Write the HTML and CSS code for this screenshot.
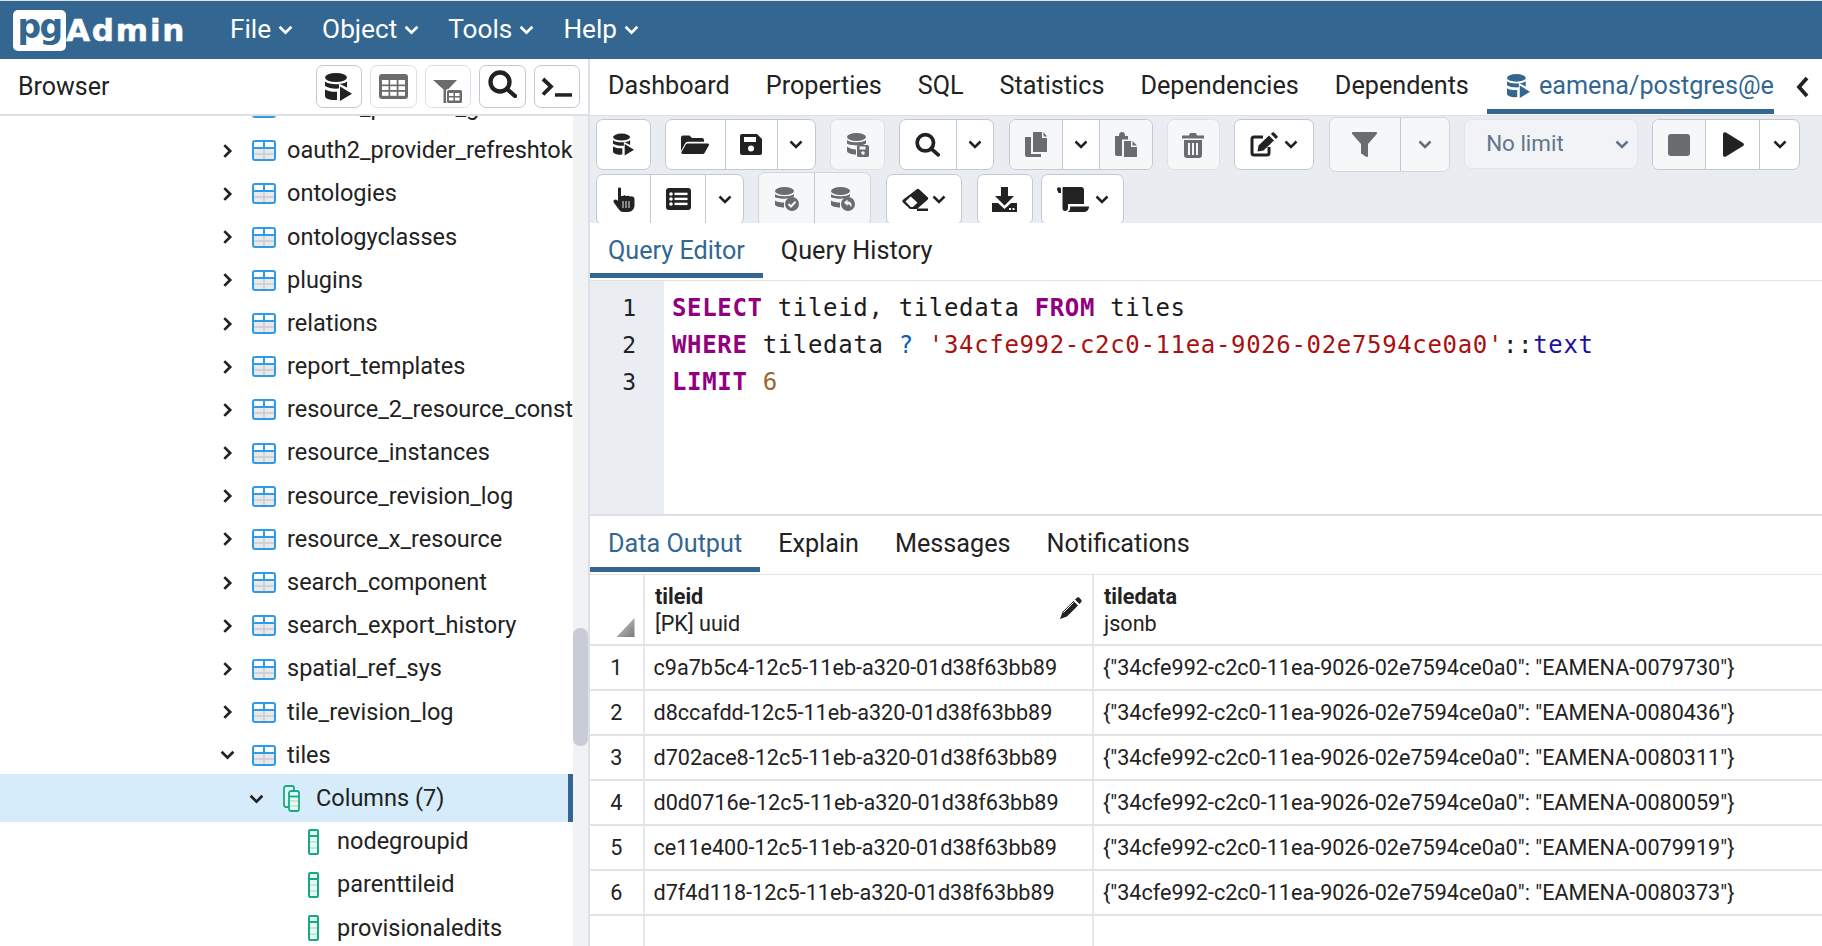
FILE: index.html
```html
<!DOCTYPE html>
<html lang="en">
<head>
<meta charset="utf-8">
<title>pgAdmin</title>
<link rel="stylesheet" href="styles.css">
</head>
<body>
<svg class="sprite" aria-hidden="true">
  <symbol id="chev" viewBox="0 0 14 9"><polyline points="1.5,1.5 7,7 12.5,1.5" fill="none" stroke="currentColor" stroke-width="2.5"/></symbol>
  <symbol id="dbrun" viewBox="0 0 27 28"><g fill="currentColor"><ellipse cx="11" cy="4.5" rx="11" ry="4.5"/><path d="M0 8.5C4 12 18 12 22 8.5V14.5L14 10.5V15.5C9 16 3 15 0 13Z"/><path d="M0 16.5C3 18.5 8 19 12 18.8V27C6 27.5 0 26 0 23Z"/><path d="M15 13.5L27 20.8 15 28Z"/></g></symbol>
  <symbol id="grid" viewBox="0 0 29 25"><rect width="29" height="25" rx="3" fill="currentColor"/><g fill="#fff"><rect x="3" y="6" width="6.5" height="4.5"/><rect x="11.2" y="6" width="6.5" height="4.5"/><rect x="19.5" y="6" width="6.5" height="4.5"/><rect x="3" y="12.2" width="6.5" height="3.8"/><rect x="11.2" y="12.2" width="6.5" height="3.8"/><rect x="19.5" y="12.2" width="6.5" height="3.8"/><rect x="3" y="17.8" width="6.5" height="4"/><rect x="11.2" y="17.8" width="6.5" height="4"/><rect x="19.5" y="17.8" width="6.5" height="4"/></g></symbol>
  <symbol id="ftable" viewBox="0 0 29 23"><path d="M0 0H24L15 9.5V23H10.500V9.500Z" fill="currentColor"/><rect x="13" y="9" width="16" height="14" rx="1.500" fill="#fff"/><rect x="14" y="10" width="15" height="13" rx="1.500" fill="currentColor"/><g fill="#fff"><rect x="16" y="13" width="4.500" height="3"/><rect x="22" y="13" width="4.500" height="3"/><rect x="16" y="17.500" width="4.500" height="3"/><rect x="22" y="17.500" width="4.500" height="3"/></g></symbol>
  <symbol id="search" viewBox="0 0 29 28"><circle cx="12" cy="12" r="9.500" fill="none" stroke="currentColor" stroke-width="4.300"/><line x1="19" y1="19" x2="27" y2="26" stroke="currentColor" stroke-width="4.300" stroke-linecap="round"/></symbol>
  <symbol id="term" viewBox="0 0 31 20"><polyline points="2,2 10,9.500 2,17.500" fill="none" stroke="currentColor" stroke-width="3.800"/><rect x="14" y="16.200" width="17" height="3.500" fill="currentColor"/></symbol>
  <symbol id="folder" viewBox="0 0 28 19"><g fill="currentColor"><path d="M0 16V2.500A2 2 0 0 1 2 .5H8.500L11 3H21A2 2 0 0 1 23 5V6.800H7A3.500 3.500 0 0 0 3.800 9Z"/><path d="M6.500 8.500H26.500C27.800 8.500 28.300 9.500 27.800 10.500L23.500 18A2 2 0 0 1 22 19H1.500C.5 19 0 18 .5 17L4.800 9.500A2 2 0 0 1 6.500 8.500Z"/></g></symbol>
  <symbol id="save" viewBox="0 0 22 21"><path d="M2 0H17L22 5V19A2 2 0 0 1 20 21H2A2 2 0 0 1 0 19V2A2 2 0 0 1 2 0Z" fill="currentColor"/><rect x="4" y="3" width="12" height="5" fill="#fff"/><circle cx="11" cy="14.500" r="3" fill="#fff"/></symbol>
  <symbol id="dbsave" viewBox="0 0 22 24"><g fill="currentColor"><ellipse cx="9.500" cy="4" rx="9.500" ry="4"/><path d="M0 7C2.500 10 16.500 10 19 7V10.500C16.500 13 2.500 13 0 10.500Z"/><path d="M0 13.500C2 15.500 6 16.500 9 16.500V21.500C5 21.500 0 20 0 18Z"/><rect x="10" y="12" width="12" height="12" rx="1.500"/></g><rect x="12.500" y="13.500" width="6" height="3" fill="#f6f7f9"/><circle cx="16" cy="20" r="1.800" fill="#f6f7f9"/></symbol>
  <symbol id="dbcheck" viewBox="0 0 24 24"><g fill="currentColor"><ellipse cx="9.500" cy="4" rx="9.500" ry="4"/><path d="M0 7C2.500 10 16.500 10 19 7V9.500C13 11.500 11 13 0 10.500Z"/><path d="M0 13.500C2 15 6 15.500 9 15.500V20.500C5 20.500 0 19.500 0 17.500Z"/><circle cx="17" cy="17" r="7"/></g><polyline points="13.500,17 16,19.500 20.500,14.800" fill="none" stroke="#f6f7f9" stroke-width="2"/></symbol>
  <symbol id="dbundo" viewBox="0 0 24 24"><g fill="currentColor"><ellipse cx="9.500" cy="4" rx="9.500" ry="4"/><path d="M0 7C2.500 10 16.500 10 19 7V9.500C13 11.500 11 13 0 10.500Z"/><path d="M0 13.500C2 15 6 15.500 9 15.500V20.500C5 20.500 0 19.500 0 17.500Z"/><circle cx="17" cy="17" r="7"/></g><path d="M13 15.500L16.500 12.500V14.500C20 14.500 21.500 17 20 20.500C19.500 18 18.500 17.300 16.500 17.300V19Z" fill="#f6f7f9"/></symbol>
  <symbol id="copy" viewBox="0 0 22 25"><g fill="currentColor"><path d="M8 0H17V6H22V20H8Z"/><path d="M18.500 0L22 4.500H18.500Z"/><path d="M0 5H6V22H16V25H2A2 2 0 0 1 0 23Z"/></g></symbol>
  <symbol id="paste" viewBox="0 0 22 25"><g fill="currentColor"><path d="M0 4H4C4 1 5 0 7 0C9 0 10 1 10 4H13V7.500H7V24H2A2 2 0 0 1 0 22Z"/><path d="M9 9H16V15H22V25H9Z"/><path d="M17.500 9L22 13.500H17.500Z"/></g></symbol>
  <symbol id="trash" viewBox="0 0 22 26"><path d="M0 3.500H7L8 1H14L15 3.500H22V6.500H0Z" fill="currentColor"/><path d="M2 8H20V23A3 3 0 0 1 17 26H5A3 3 0 0 1 2 23Z" fill="currentColor"/><g fill="#f6f7f9"><rect x="6" y="11" width="2" height="12"/><rect x="10" y="11" width="2" height="12"/><rect x="14" y="11" width="2" height="12"/></g></symbol>
  <symbol id="edit" viewBox="0 0 28 25"><path d="M13 5H4A2 2 0 0 0 2 7V21A2 2 0 0 0 4 23H17A2 2 0 0 0 19 21V15" fill="none" stroke="currentColor" stroke-width="3"/><path d="M8.500 13.500L19 3.500 24 8.500 13.500 18.500 7.500 19.500Z M20.800 1.800L22.500.5C23 .1 23.600.1 24 .5L27.500 4C27.900 4.500 27.900 5 27.500 5.500L25.800 7Z" fill="currentColor"/></symbol>
  <symbol id="funnel" viewBox="0 0 25 25"><path d="M1 0H24C25 0 25.500 1 24.800 2L16 12V24C16 25 15 25.300 14 24.800L10 22A1 1 0 0 1 9 21V12L.2 2C-.5 1 0 0 1 0Z" fill="currentColor"/></symbol>
  <symbol id="stop" viewBox="0 0 22 22"><rect width="22" height="22" rx="3" fill="currentColor"/></symbol>
  <symbol id="play" viewBox="0 0 22 25"><path d="M1 2C1 .5 2.500-.3 4 .5L21 11C22.300 12 22.300 13 21 14L4 24.500C2.500 25.300 1 24.500 1 23Z" fill="currentColor"/></symbol>
  <symbol id="hand" viewBox="0 0 22 25"><path d="M5 1.500C5 .2 8 .2 8 1.500V9H10C10.500 8 12.500 8 13 9H14C14.500 8.500 16.500 8.500 17 9.500H18C19 9 21.500 10 21.500 12V18C21.500 22 19 25 15 25H10C8 25 7 24 5.500 22L.8 15.500C-.5 13.500 2 11.500 4 13L5 14Z" fill="currentColor"/><g stroke="#fff" stroke-width=".9"><line x1="10" y1="14" x2="10" y2="21"/><line x1="13" y1="14" x2="13" y2="21"/><line x1="16" y1="14" x2="16" y2="21"/></g></symbol>
  <symbol id="list" viewBox="0 0 25 22"><rect width="25" height="22" rx="3" fill="currentColor"/><g fill="#fff"><circle cx="5" cy="6" r="1.800"/><circle cx="5" cy="11" r="1.800"/><circle cx="5" cy="16" r="1.800"/><rect x="8.500" y="4.700" width="13" height="2.400"/><rect x="8.500" y="9.700" width="13" height="2.400"/><rect x="8.500" y="14.700" width="13" height="2.400"/></g></symbol>
  <symbol id="eraser" viewBox="0 0 27 23"><path d="M14.500 1.500A2 2 0 0 1 17.300 1.500L25.500 9A2 2 0 0 1 25.500 11.800L15 21H8L1 14.500A2 2 0 0 1 1 11.700Z" fill="currentColor"/><path d="M8.800 8.500L15.500 14.800 10.800 19H8.800L3.500 13.500Z" fill="#fff"/><rect x="15" y="20.500" width="11" height="2.500" fill="currentColor"/></symbol>
  <symbol id="download" viewBox="0 0 25 25"><g fill="currentColor"><path d="M9 0H16V9H22L12.500 18.500 3 9H9Z"/><path d="M0 16H6L12.500 22 19 16H25V25H0Z"/></g><rect x="17" y="21" width="2" height="2" fill="#fff"/><rect x="20.500" y="21" width="2" height="2" fill="#fff"/></symbol>
  <symbol id="scroll" viewBox="0 0 32 25"><g fill="currentColor"><path d="M0 2.500A2 2 0 0 1 4 2V6H1.500Z"/><path d="M6 0H24A3 3 0 0 1 27 3V17H11V21C11 23 10 24 8 24 6 24 5.500 22.500 5.500 21V3C5.500 1.500 5.500 .5 6 0Z"/><path d="M13 19.500H32C32 22.500 30 25 27 25H10.500C13 24 13.500 21.500 13 19.500Z"/></g></symbol>
  <symbol id="tbl" viewBox="0 0 24 21"><rect x="1" y="1" width="22" height="19" rx="2" fill="#fff"/><rect x="2" y="9" width="20" height="10" fill="#e9e9ea"/><g stroke="#c9cdd2" stroke-width="1.600"><line x1="2" y1="14" x2="22" y2="14"/><line x1="12" y1="9" x2="12" y2="19"/></g><g stroke="#2f9be6" stroke-width="2" fill="none"><rect x="1" y="1" width="22" height="19" rx="2"/><line x1="1" y1="8" x2="23" y2="8"/><line x1="12" y1="1" x2="12" y2="8"/></g></symbol>
  <symbol id="col" viewBox="0 0 11 26"><rect x="1" y="1" width="9" height="24" rx="1" fill="#e4fbf4"/><g stroke="#c3d8d2" stroke-width="1.500"><line x1="1" y1="13" x2="10" y2="13"/><line x1="1" y1="19" x2="10" y2="19"/></g><g stroke="#19a886" stroke-width="2" fill="none"><rect x="1" y="1" width="9" height="24" rx="1"/><line x1="1" y1="7" x2="10" y2="7"/></g></symbol>
  <symbol id="cols" viewBox="0 0 17 27"><g stroke="#19a886" stroke-width="1.800"><rect x="1" y="1" width="10" height="21" rx="2" fill="#e4fbf4"/><rect x="6" y="6" width="10" height="20" rx="2" fill="#e4fbf4"/><line x1="6" y1="11.500" x2="16" y2="11.500"/></g><g stroke="#c3d8d2" stroke-width="1.400"><line x1="7" y1="16" x2="15" y2="16"/><line x1="7" y1="21" x2="15" y2="21"/></g></symbol>
  <symbol id="pencil" viewBox="0 0 23 23"><path d="M3.500 15L14.500 4 19 8.500 8 19.500 1 22Z M16 2.500L18 .8C18.700.2 19.700.2 20.300.8L22.200 2.700C22.800 3.300 22.800 4.300 22.200 5L20.500 7Z" fill="currentColor"/><path d="M4.500 15.500L14.500 5.500" stroke="#fff" stroke-width="1"/></symbol>
  <symbol id="back" viewBox="0 0 13 22"><polyline points="11,2 3,11 11,20" fill="none" stroke="currentColor" stroke-width="3.800"/></symbol>
</svg>

<header class="topbar">
  <div class="logo"><span class="logo-pg">pg</span><span class="logo-admin">Admin</span></div>
  <nav class="menu">
    <span class="menu-item">File<svg class="ic-chev"><use href="#chev"/></svg></span>
    <span class="menu-item">Object<svg class="ic-chev"><use href="#chev"/></svg></span>
    <span class="menu-item">Tools<svg class="ic-chev"><use href="#chev"/></svg></span>
    <span class="menu-item">Help<svg class="ic-chev"><use href="#chev"/></svg></span>
  </nav>
</header>

<main class="app">
  <aside class="browser">
    <div class="browser-head">
      <span class="browser-title">Browser</span>
      <div class="browser-tools">
        <button class="bbtn"><svg width="27" height="28"><use href="#dbrun"/></svg></button>
        <button class="bbtn off"><svg width="29" height="25"><use href="#grid"/></svg></button>
        <button class="bbtn off filt"><svg width="29" height="23"><use href="#ftable"/></svg></button>
        <button class="bbtn up"><svg width="29" height="28"><use href="#search"/></svg></button>
        <button class="bbtn"><svg width="31" height="20"><use href="#term"/></svg></button>
      </div>
    </div>
    <div class="tree-wrap">
      <ul class="tree">
        <li class="row"><svg class="arrow"><use href="#chev"/></svg><svg class="tbl"><use href="#tbl"/></svg><span>oauth2_provider_grant</span></li>
        <li class="row"><svg class="arrow"><use href="#chev"/></svg><svg class="tbl"><use href="#tbl"/></svg><span>oauth2_provider_refreshtoken</span></li>
        <li class="row"><svg class="arrow"><use href="#chev"/></svg><svg class="tbl"><use href="#tbl"/></svg><span>ontologies</span></li>
        <li class="row"><svg class="arrow"><use href="#chev"/></svg><svg class="tbl"><use href="#tbl"/></svg><span>ontologyclasses</span></li>
        <li class="row"><svg class="arrow"><use href="#chev"/></svg><svg class="tbl"><use href="#tbl"/></svg><span>plugins</span></li>
        <li class="row"><svg class="arrow"><use href="#chev"/></svg><svg class="tbl"><use href="#tbl"/></svg><span>relations</span></li>
        <li class="row"><svg class="arrow"><use href="#chev"/></svg><svg class="tbl"><use href="#tbl"/></svg><span>report_templates</span></li>
        <li class="row"><svg class="arrow"><use href="#chev"/></svg><svg class="tbl"><use href="#tbl"/></svg><span>resource_2_resource_constraints</span></li>
        <li class="row"><svg class="arrow"><use href="#chev"/></svg><svg class="tbl"><use href="#tbl"/></svg><span>resource_instances</span></li>
        <li class="row"><svg class="arrow"><use href="#chev"/></svg><svg class="tbl"><use href="#tbl"/></svg><span>resource_revision_log</span></li>
        <li class="row"><svg class="arrow"><use href="#chev"/></svg><svg class="tbl"><use href="#tbl"/></svg><span>resource_x_resource</span></li>
        <li class="row"><svg class="arrow"><use href="#chev"/></svg><svg class="tbl"><use href="#tbl"/></svg><span>search_component</span></li>
        <li class="row"><svg class="arrow"><use href="#chev"/></svg><svg class="tbl"><use href="#tbl"/></svg><span>search_export_history</span></li>
        <li class="row"><svg class="arrow"><use href="#chev"/></svg><svg class="tbl"><use href="#tbl"/></svg><span>spatial_ref_sys</span></li>
        <li class="row"><svg class="arrow"><use href="#chev"/></svg><svg class="tbl"><use href="#tbl"/></svg><span>tile_revision_log</span></li>
        <li class="row"><svg class="arrow open"><use href="#chev"/></svg><svg class="tbl"><use href="#tbl"/></svg><span>tiles</span></li>
        <li class="row sub selected"><svg class="arrow open"><use href="#chev"/></svg><svg class="cols"><use href="#cols"/></svg><span>Columns (7)</span></li>
        <li class="row leaf"><svg class="col"><use href="#col"/></svg><span>nodegroupid</span></li>
        <li class="row leaf"><svg class="col"><use href="#col"/></svg><span>parenttileid</span></li>
        <li class="row leaf"><svg class="col"><use href="#col"/></svg><span>provisionaledits</span></li>
      </ul>
      <div class="scrollbar"><div class="thumb"></div></div>
    </div>
  </aside>

  <section class="main">
    <div class="tabs top-tabs">
      <span class="tab">Dashboard</span>
      <span class="tab">Properties</span>
      <span class="tab">SQL</span>
      <span class="tab">Statistics</span>
      <span class="tab">Dependencies</span>
      <span class="tab">Dependents</span>
      <span class="tab active query-tab"><svg width="23" height="24" class="tab-ic"><use href="#dbrun"/></svg><span class="tab-label">eamena/postgres@eamena</span></span>
      <svg class="tabs-back" width="13" height="22"><use href="#back"/></svg>
    </div>

    <div class="toolbar">
      <div class="tool-row">
        <div class="grp w54"><button class="tb"><svg width="21" height="23"><use href="#dbrun"/></svg></button></div>
        <div class="grp">
          <button class="tb w59"><svg width="28" height="19"><use href="#folder"/></svg></button>
          <button class="tb w52"><svg width="22" height="21"><use href="#save"/></svg></button>
          <button class="tb w38"><svg class="ic-c"><use href="#chev"/></svg></button>
        </div>
        <div class="grp off w54"><button class="tb"><svg width="22" height="24"><use href="#dbsave"/></svg></button></div>
        <div class="grp">
          <button class="tb w55h"><svg width="25" height="25"><use href="#search"/></svg></button>
          <button class="tb w37"><svg class="ic-c"><use href="#chev"/></svg></button>
        </div>
        <div class="grp">
          <button class="tb w52 off"><svg width="22" height="25"><use href="#copy"/></svg></button>
          <button class="tb w38 stand"><svg class="ic-c"><use href="#chev"/></svg></button>
          <button class="tb w52 off"><svg width="22" height="25"><use href="#paste"/></svg></button>
        </div>
        <div class="grp off w53"><button class="tb"><svg width="22" height="26"><use href="#trash"/></svg></button></div>
        <div class="grp w80"><button class="tb gap6"><svg width="28" height="25"><use href="#edit"/></svg><svg class="ic-c"><use href="#chev"/></svg></button></div>
        <div class="grp off tall">
          <button class="tb w70"><svg width="25" height="25"><use href="#funnel"/></svg></button>
          <button class="tb w49"><svg class="ic-c"><use href="#chev"/></svg></button>
        </div>
        <div class="limit"><span>No limit</span><svg class="ic-c"><use href="#chev"/></svg></div>
        <div class="grp">
          <button class="tb w52 off"><svg width="22" height="22"><use href="#stop"/></svg></button>
          <button class="tb w54b"><svg width="22" height="25"><use href="#play"/></svg></button>
          <button class="tb w40"><svg class="ic-c"><use href="#chev"/></svg></button>
        </div>
      </div>
      <div class="tool-row">
        <div class="grp">
          <button class="tb w53"><svg width="22" height="25"><use href="#hand"/></svg></button>
          <button class="tb w55"><svg width="25" height="22"><use href="#list"/></svg></button>
          <button class="tb w38"><svg class="ic-c"><use href="#chev"/></svg></button>
        </div>
        <div class="grp off tall">
          <button class="tb w55"><svg width="24" height="24"><use href="#dbcheck"/></svg></button>
          <button class="tb w56"><svg width="24" height="24"><use href="#dbundo"/></svg></button>
        </div>
        <div class="grp w76"><button class="tb gap3"><svg width="27" height="23"><use href="#eraser"/></svg><svg class="ic-c"><use href="#chev"/></svg></button></div>
        <div class="grp w56b"><button class="tb"><svg width="25" height="25"><use href="#download"/></svg></button></div>
        <div class="grp w83 near"><button class="tb gap6"><svg width="32" height="25"><use href="#scroll"/></svg><svg class="ic-c"><use href="#chev"/></svg></button></div>
      </div>
    </div>

    <div class="tabs sub-tabs query-tabs">
      <span class="tab active">Query Editor</span>
      <span class="tab">Query History</span>
    </div>

    <div class="editor">
      <ol class="gutter"><li>1</li><li>2</li><li>3</li></ol>
      <pre class="code"><span class="k">SELECT</span> tileid, tiledata <span class="k">FROM</span> tiles
<span class="k">WHERE</span> tiledata <span class="o">?</span> <span class="s">'34cfe992-c2c0-11ea-9026-02e7594ce0a0'</span>::<span class="t">text</span>
<span class="k">LIMIT</span> <span class="n">6</span></pre>
    </div>

    <div class="tabs sub-tabs data-tabs">
      <span class="tab active">Data Output</span>
      <span class="tab">Explain</span>
      <span class="tab">Messages</span>
      <span class="tab">Notifications</span>
    </div>

    <div class="grid">
      <div class="g-row g-head">
        <div class="c-num"><span class="corner"></span></div>
        <div class="c-id"><div><b>tileid</b><br>[PK] uuid</div><svg class="pencil" width="23" height="23"><use href="#pencil"/></svg></div>
        <div class="c-data"><div><b>tiledata</b><br>jsonb</div></div>
      </div>
      <div class="g-row"><div class="c-num">1</div><div class="c-id">c9a7b5c4-12c5-11eb-a320-01d38f63bb89</div><div class="c-data">{"34cfe992-c2c0-11ea-9026-02e7594ce0a0": "EAMENA-0079730"}</div></div>
      <div class="g-row"><div class="c-num">2</div><div class="c-id">d8ccafdd-12c5-11eb-a320-01d38f63bb89</div><div class="c-data">{"34cfe992-c2c0-11ea-9026-02e7594ce0a0": "EAMENA-0080436"}</div></div>
      <div class="g-row"><div class="c-num">3</div><div class="c-id">d702ace8-12c5-11eb-a320-01d38f63bb89</div><div class="c-data">{"34cfe992-c2c0-11ea-9026-02e7594ce0a0": "EAMENA-0080311"}</div></div>
      <div class="g-row"><div class="c-num">4</div><div class="c-id">d0d0716e-12c5-11eb-a320-01d38f63bb89</div><div class="c-data">{"34cfe992-c2c0-11ea-9026-02e7594ce0a0": "EAMENA-0080059"}</div></div>
      <div class="g-row"><div class="c-num">5</div><div class="c-id">ce11e400-12c5-11eb-a320-01d38f63bb89</div><div class="c-data">{"34cfe992-c2c0-11ea-9026-02e7594ce0a0": "EAMENA-0079919"}</div></div>
      <div class="g-row"><div class="c-num">6</div><div class="c-id">d7f4d118-12c5-11eb-a320-01d38f63bb89</div><div class="c-data">{"34cfe992-c2c0-11ea-9026-02e7594ce0a0": "EAMENA-0080373"}</div></div>
      <div class="g-row g-fill"><div class="c-num"></div><div class="c-id"></div><div class="c-data"></div></div>
    </div>
  </section>
</main>
</body>
</html>
```
FILE: styles.css
```css
* { box-sizing: border-box; }
html, body { margin: 0; height: 100%; overflow: hidden; }
body {
  display: flex;
  flex-direction: column;
  font: 22.4px/1.5 Roboto, "Liberation Sans", sans-serif;
  color: #222;
  background: #fff;
}
.sprite { display: none; }
svg { display: block; flex: none; }
button { font: inherit; color: inherit; }

/* top bar */
.topbar {
  flex: none;
  height: 59px;
  display: flex;
  align-items: center;
  background: #336791;
  border-top: 1px solid #dfe3e8;
  color: #fff;
}
.logo { display: flex; align-items: center; margin-left: 13px; width: 217px; }
.logo-pg {
  width: 53px;
  height: 41px;
  background: #fff;
  border-radius: 5px;
  color: #336791;
  font: 700 33px/33px "DejaVu Sans", sans-serif;
  letter-spacing: -1.5px;
  text-align: center;
}
.logo-admin {
  font: 700 31px/41px "DejaVu Sans", sans-serif;
  letter-spacing: 1.8px;
  -webkit-text-stroke: .5px #fff;
}
.menu { display: flex; }
.menu-item { display: flex; align-items: center; gap: 7px; margin-right: 29px; font-size: 26.2px; }
.ic-chev { width: 15px; height: 10px; }

.app { flex: 1; min-height: 0; display: flex; }

/* browser */
.browser {
  flex: none;
  width: 590px;
  display: flex;
  flex-direction: column;
  border-right: 2px solid #dde1e7;
}
.browser-head {
  flex: none;
  height: 57px;
  display: flex;
  align-items: center;
  justify-content: space-between;
  padding: 0 8px 0 18px;
  border-bottom: 2px solid #dde1e7;
  font-size: 25px;
}
.browser-tools { display: flex; gap: 8px; }
.bbtn {
  width: 46.500px;
  height: 43px;
  padding: 0;
  display: flex;
  align-items: center;
  justify-content: center;
  background: #fff;
  border: 1px solid #c3c8d4;
  border-radius: 7px;
}
.bbtn.off { color: #6a6c6e; border-color: #dde0e6; }
.bbtn.filt { padding-top: 10px; }
.bbtn.up { padding-bottom: 6px; }
.tree-wrap { flex: 1; min-height: 0; display: flex; overflow: hidden; }
.tree {
  flex: 1;
  min-width: 0;
  list-style: none;
  margin: -30px 0 0;
  padding: 0;
  overflow: hidden;
  font-size: 23.5px;
}
.row {
  position: relative;
  height: 43.2px;
  display: flex;
  align-items: center;
  padding-left: 220px;
  white-space: nowrap;
}
.arrow { width: 15px; height: 10px; transform: rotate(-90deg); margin-right: 17px; }
.arrow.open { transform: none; }
.tbl { width: 24px; height: 21px; margin-right: 11px; }
.row.sub { padding-left: 249px; }
.row.sub .cols { width: 17px; height: 27px; margin-right: 16px; margin-left: 5px; }
.row.sub .arrow { margin-right: 14px; }
.row.leaf { padding-left: 308px; }
.col { width: 11px; height: 26px; margin-right: 18px; }
.row span { position: relative; }
.row svg { position: relative; }
.selected::before {
  content: "";
  position: absolute;
  left: 0;
  right: 0;
  top: -3px;
  bottom: -2px;
  background: #d6ecfa;
  border-right: 5px solid #336791;
}
.scrollbar { flex: none; width: 15px; background: #f1f2f4; }
.thumb { margin-top: 512px; height: 118px; background: #c8ccd6; border-radius: 7px; }

/* main */
.main { flex: 1; min-width: 0; display: flex; flex-direction: column; font-size: 25.2px; }
.tabs { flex: none; display: flex; white-space: nowrap; }
.tab { display: flex; align-items: center; gap: 9px; padding: 0 18px; border-bottom: 5px solid transparent; }
.tab.active { color: #336791; border-bottom-color: #336791; }
.top-tabs { height: 56px; padding-bottom: 1px; align-items: stretch; }
.top-tabs .tab { padding-top: 3px; }
.top-tabs .tab.active { padding: 3px 0 0 20px; width: 287px; overflow: hidden; }
.tab-label { overflow: hidden; }
.tabs-back { align-self: center; margin-left: 22px; color: #222; }

.toolbar {
  flex: none;
  height: 108px;
  padding: 3px 0 0 6px;
  background: #e9ecf1;
  border-top: 1px solid #dde1e7;
  overflow: hidden;
  font-size: 22.4px;
}
.tool-row { display: flex; gap: 14.400px; height: 51px; margin-bottom: 3.500px; }
.grp {
  display: flex;
  height: 51px;
  flex: none;
  background: #fff;
  border: 1px solid #c3c8d4;
  border-radius: 7px;
  overflow: hidden;
}
.grp.off, .tb.off { color: #6a6c6e; background: #f6f7f9; }
.grp.off { border-color: #dde0e6; }
.grp.tall { height: 54.500px; margin-top: -1.700px; border-color: #d2d6df; }
.near { margin-left: -6.400px; }
.tb {
  flex: 1 0 auto;
  padding: 0;
  display: flex;
  align-items: center;
  justify-content: center;
  background: transparent;
  border: 0;
  border-left: 1px solid #c3c8d4;
}
.tb:first-child { border-left: 0; }
.tb.off + .tb.off { border-left: 1px solid #dde0e6; }
.tb.stand { background: #fff; border-right: 1px solid #c3c8d4; }
.tb.stand + .tb.off { border-left: 0; }
.gap6 { gap: 6px; }
.gap3 { gap: 3px; }
.ic-c { width: 14px; height: 9px; }
.w37 { width: 37.500px; } .w38 { width: 38px; } .w40 { width: 40px; }
.w49 { width: 49px; } .w52 { width: 52px; } .w53 { width: 53px; }
.w54 { width: 54.500px; } .w54b { width: 54px; } .w55 { width: 55px; } .w55h { width: 55.500px; }
.w56 { width: 56px; } .w56b { width: 56.500px; } .w59 { width: 59px; } .w70 { width: 70px; }
.w76 { width: 76.500px; } .w80 { width: 80px; } .w83 { width: 83px; }
.limit {
  flex: none;
  width: 173.500px;
  height: 50px;
  display: flex;
  align-items: center;
  justify-content: space-between;
  padding: 0 8px 0 21px;
  background: #f1f3f7;
  border: 1px solid #e1e4ea;
  border-radius: 7px;
  color: #65748c;
}

.sub-tabs { border-bottom: 1px solid #dfe2e8; padding-bottom: 2px; align-items: stretch; }
.query-tabs { height: 58px; }
.data-tabs { height: 59px; }
.sub-tabs .tab { padding-top: 5px; }

.editor { flex: none; height: 235px; display: flex; border-bottom: 2px solid #dde1e7; }
.gutter {
  flex: none;
  width: 74px;
  margin: 0;
  padding: 8.500px 28px 0 0;
  list-style: none;
  background: #eaedf1;
  font: 23px/37px "DejaVu Sans Mono", monospace;
  text-align: right;
}
.code {
  margin: 0;
  padding: 8.500px 0 0 8px;
  font: 24px/37px "DejaVu Sans Mono", "Liberation Mono", monospace;
  letter-spacing: .66px;
  color: #1c1c1c;
}
.k { color: #90007f; font-weight: 700; }
.o { color: #0a5fb0; }
.s { color: #a91111; }
.t { color: #221199; }
.n { color: #996633; }

.grid { flex: 1; min-height: 0; display: flex; flex-direction: column; font-size: 21.600px; line-height: 27px; }
.g-row { flex: none; height: 45px; display: flex; border-bottom: 2px solid #e1e4e9; }
.g-head { height: 71px; }
.g-row.g-head > div { padding-top: 8px; }
.g-fill { flex: 1; border-bottom: 0; }
.c-num { flex: none; width: 54.500px; border-right: 2px solid #e6e8ec; display: flex; align-items: center; justify-content: center; position: relative; }
.c-id { flex: none; width: 449.500px; border-right: 2px solid #e6e8ec; padding-left: 9px; display: flex; align-items: center; justify-content: space-between; }
.g-head .c-id { padding-left: 10.500px; align-items: flex-start; }
.c-data { flex: 1; min-width: 0; padding-left: 9px; display: flex; align-items: center; white-space: nowrap; }
.g-head .c-data { padding-left: 10px; align-items: flex-start; }
.corner {
  position: absolute;
  right: 8px;
  bottom: 7px;
  width: 18px;
  height: 19px;
  background: linear-gradient(135deg, #d0d0d0, #777);
  clip-path: polygon(100% 0, 100% 100%, 0 100%);
}
.pencil { margin: 14px 10px 0 0; }
```
